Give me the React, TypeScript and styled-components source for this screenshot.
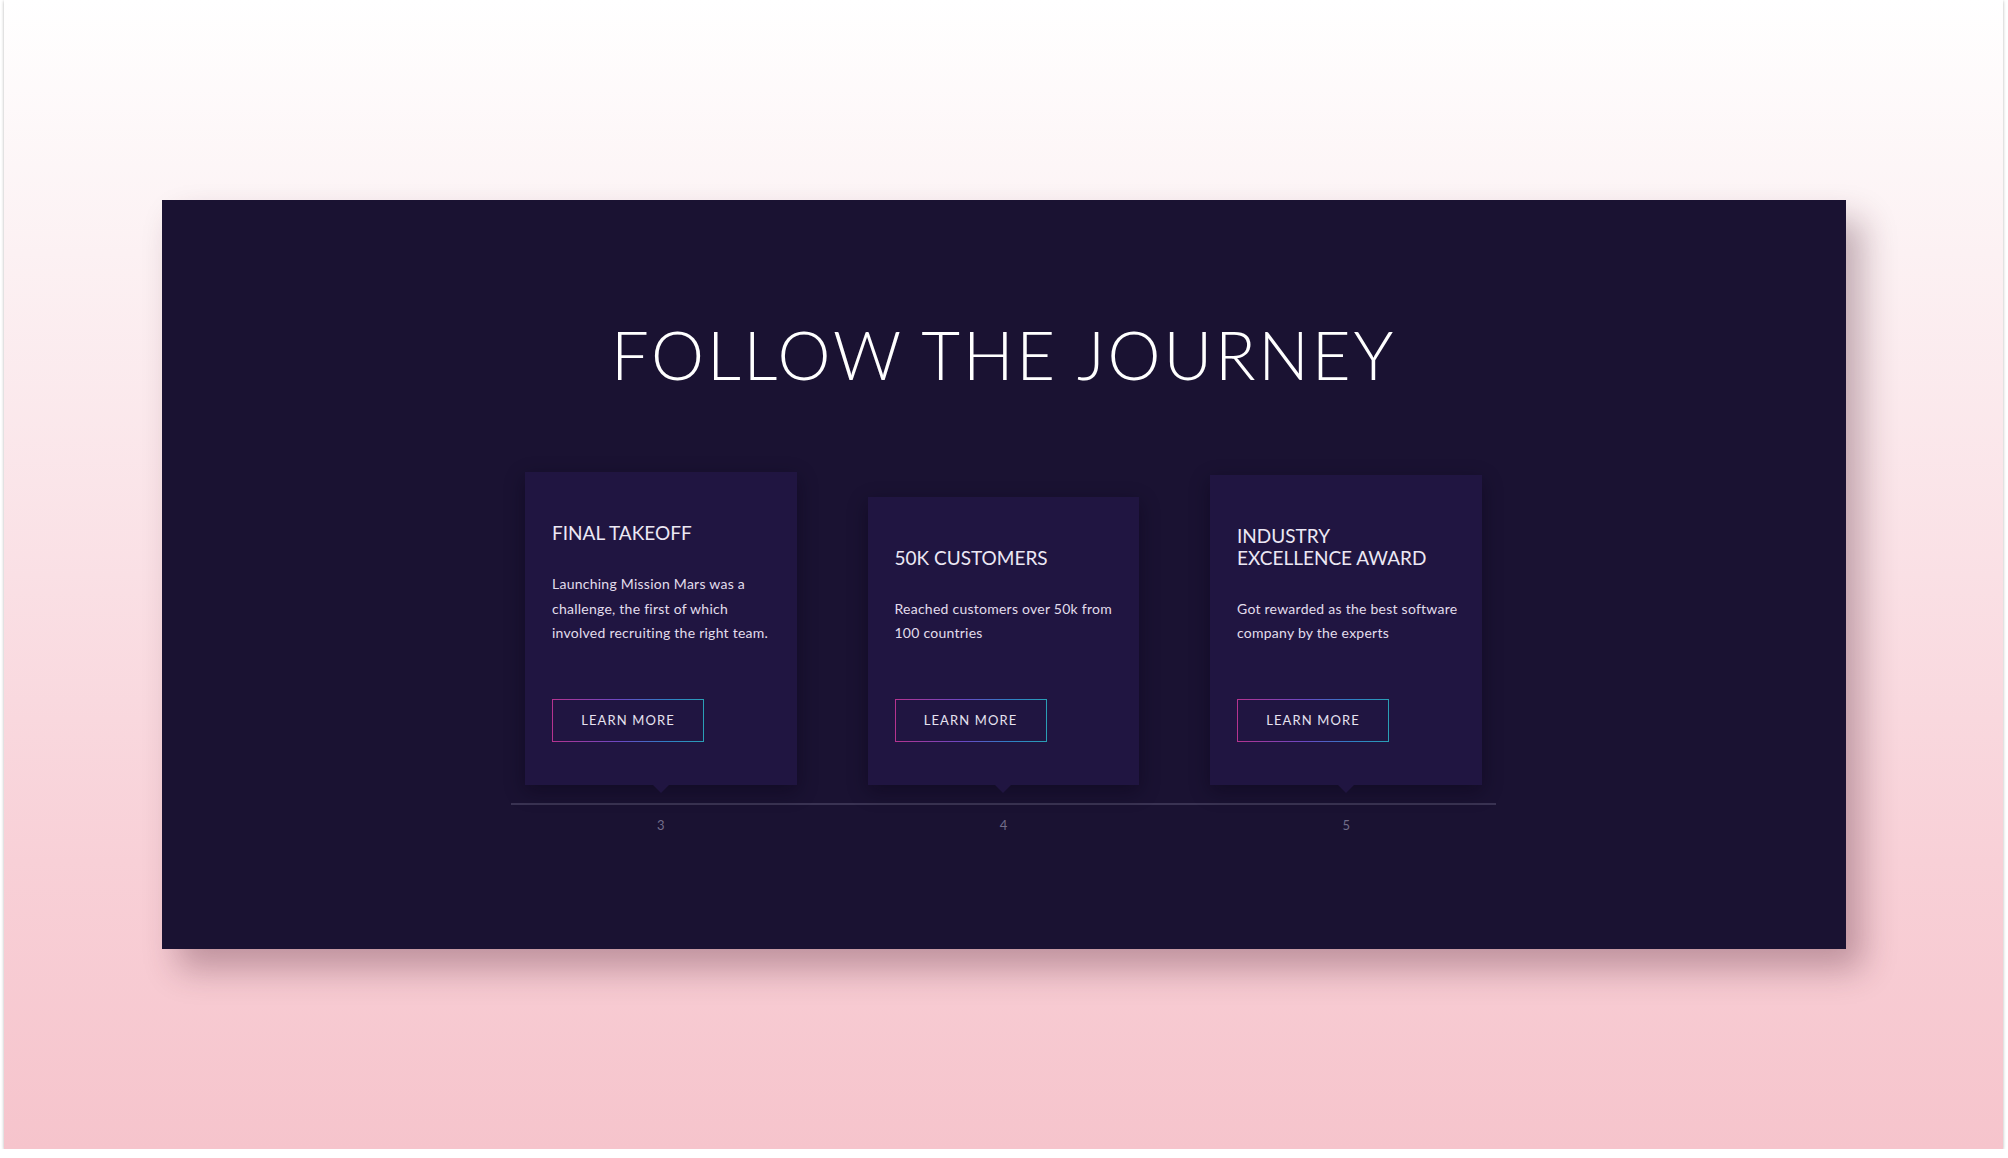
import React from "react";
import styled, { createGlobalStyle } from "styled-components";

const GlobalStyle = createGlobalStyle`
  html, body {
    margin: 0;
    padding: 0;
    background: #ffffff;
  }
  body {
    font-family: "Lato", "Open Sans", sans-serif;
  }
  * {
    box-sizing: border-box;
  }
`;

type Milestone = {
  step: number;
  title: React.ReactNode;
  text: React.ReactNode;
};

const MILESTONES: Milestone[] = [
  {
    step: 3,
    title: "FINAL TAKEOFF",
    text: (
      <>
        Launching Mission Mars was a<br />
        challenge, the first of which<br />
        involved recruiting the right team.
      </>
    ),
  },
  {
    step: 4,
    title: "50K CUSTOMERS",
    text: (
      <>
        Reached customers over 50k from<br />
        100 countries
      </>
    ),
  },
  {
    step: 5,
    title: (
      <>
        INDUSTRY<br />
        EXCELLENCE AWARD
      </>
    ),
    text: (
      <>
        Got rewarded as the best software<br />
        company by the experts
      </>
    ),
  },
];

const Page = styled.div`
  margin: 0 5px 0 4px;
  height: 1149px;
  display: flex;
  flex-direction: column;
  align-items: center;
  padding-top: 200px;
  background: linear-gradient(
    180deg,
    #ffffff 0%,
    #fcf1f3 22%,
    #fae0e5 50%,
    #f8d0d7 75%,
    #f6c4cc 100%
  );
  box-shadow: 0 1px 3px rgba(0, 0, 0, 0.3);
`;

const Panel = styled.section`
  width: 1684px;
  height: 749px;
  background: #1a1232;
  display: flex;
  flex-direction: column;
  align-items: center;
  padding-top: 121px;
  box-shadow: 16px 20px 32px rgba(70, 25, 45, 0.32);
`;

const Heading = styled.h1`
  margin: 0;
  font-family: "Lato", "Open Sans", sans-serif;
  font-weight: 300;
  font-size: 67px;
  line-height: 67px;
  letter-spacing: 2.8px;
  color: #ffffff;
`;

const Timeline = styled.div`
  width: 985px;
  margin-top: 84px;
  display: flex;
  flex-direction: column;
`;

const CardRow = styled.div`
  display: flex;
  align-items: flex-end;
  gap: 71px;
  padding: 0 14px;
`;

const Card = styled.article`
  position: relative;
  width: 272px;
  background: #201541;
  padding: 50px 27px 43px;
  display: flex;
  flex-direction: column;
  align-items: flex-start;
  box-shadow: 0 6px 18px rgba(8, 4, 22, 0.45);

  &::after {
    content: "";
    position: absolute;
    top: 100%;
    left: 50%;
    transform: translateX(-50%);
    border-top: 8px solid #201541;
    border-left: 8px solid transparent;
    border-right: 8px solid transparent;
  }
`;

const CardTitle = styled.h3`
  margin: 0;
  font-size: 19px;
  line-height: 22px;
  font-weight: 400;
  color: #ece8f4;
`;

const CardText = styled.p`
  margin: 28px 0 0;
  font-size: 14px;
  line-height: 24.5px;
  letter-spacing: 0.25px;
  color: #e2ddec;
  white-space: nowrap;
`;

const LearnMore = styled.button`
  margin-top: 53px;
  width: 152px;
  height: 43px;
  background: transparent;
  border: 1.5px solid;
  border-image: linear-gradient(90deg, #b5338f 0%, #6a48c4 45%, #2f7fc4 75%, #2a9fb6 100%) 1;
  color: #e6e2f0;
  font-family: "Lato", "Open Sans", sans-serif;
  font-size: 13px;
  font-weight: 400;
  letter-spacing: 1.1px;
  cursor: pointer;
`;

const Axis = styled.div`
  margin-top: 18px;
  border-top: 2px solid #3a3353;
  display: flex;
  gap: 71px;
  padding: 11px 14px 0;
`;

const Tick = styled.span`
  width: 272px;
  text-align: center;
  font-size: 13px;
  line-height: 18px;
  color: #726d8a;
`;

export default function App() {
  return (
    <>
      <GlobalStyle />
      <Page>
        <Panel>
          <Heading>FOLLOW THE JOURNEY</Heading>
          <Timeline>
            <CardRow>
              {MILESTONES.map((m) => (
                <Card key={m.step}>
                  <CardTitle>{m.title}</CardTitle>
                  <CardText>{m.text}</CardText>
                  <LearnMore>LEARN MORE</LearnMore>
                </Card>
              ))}
            </CardRow>
            <Axis>
              {MILESTONES.map((m) => (
                <Tick key={m.step}>{m.step}</Tick>
              ))}
            </Axis>
          </Timeline>
        </Panel>
      </Page>
    </>
  );
}
